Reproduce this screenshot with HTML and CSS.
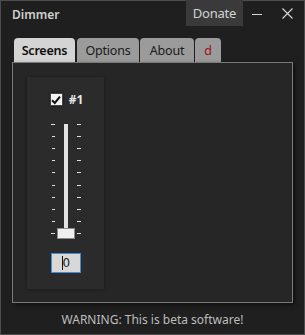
FILE: index.html
```html
<!DOCTYPE html>
<html lang="en">
<head>
  <meta charset="utf-8">
  <title>Dimmer</title>
  <link rel="stylesheet" href="styles.css">
</head>
<body>
  <div class="window">
    <div class="titlebar">
      <span class="title">Dimmer</span>
      <span class="donate">Donate</span>
      <span class="win-btn min">
        <svg width="10" height="10" viewBox="0 0 10 10"><path d="M0 5.5H10" stroke="#d8d8d8" stroke-width="1"/></svg>
      </span>
      <span class="win-btn close">
        <svg width="11" height="11" viewBox="0 0 11 11"><path d="M0.5 0.5L10.5 10.5M10.5 0.5L0.5 10.5" stroke="#d8d8d8" stroke-width="1.1"/></svg>
      </span>
    </div>

    <div class="tabs">
      <div class="tab active">Screens</div>
      <div class="tab">Options</div>
      <div class="tab">About</div>
      <div class="tab red">d</div>
    </div>

    <div class="panel">
      <div class="screen-box">
        <label class="check-row">
          <span class="checkbox">
            <svg width="10" height="10" viewBox="0 0 10 10"><path d="M1 5.2L3.8 8L9 1.6" fill="none" stroke="#111" stroke-width="2"/></svg>
          </span>
          <span class="num">#1</span>
        </label>

        <div class="slider">
          <div class="ticks">
            <i class="wide"></i><i></i><i></i><i></i><i></i><i></i><i></i><i></i><i></i><i class="wide"></i>
          </div>
          <div class="rail">
            <div class="track"></div>
            <div class="thumb"></div>
          </div>
          <div class="ticks right">
            <i></i><i></i><i></i><i></i><i></i><i></i><i></i><i></i><i></i><i></i>
          </div>
        </div>

        <div class="value-box"><span class="caret"></span>0</div>
      </div>
    </div>

    <div class="warning">WARNING: This is beta software!</div>
  </div>
</body>
</html>
```

FILE: styles.css
```css
body {
  margin: 0;
  background: #1f1f1f;
  font-family: "Noto Sans", "Open Sans", sans-serif;
}

.window {
  width: 305px;
  height: 335px;
  box-sizing: border-box;
  border: 1px solid #4c4c4c;
  background: #1f1f1f;
  display: flex;
  flex-direction: column;
}

/* title bar */
.titlebar {
  height: 25px;
  display: flex;
  align-items: center;
}
.title {
  flex: 1;
  padding-left: 11px;
  font-size: 12px;
  font-weight: 600;
  color: #d0d0d0;
  margin-top: 2px;
}
.donate {
  align-self: flex-start;
  height: 26px;
  margin-top: -1px;
  width: 57px;
  box-sizing: border-box;
  background: #3a3a3a;
  color: #d4d4d4;
  font-size: 13px;
  letter-spacing: -0.2px;
  display: flex;
  align-items: center;
  justify-content: center;
}
.win-btn {
  display: flex;
  justify-content: center;
}
.win-btn.min {
  width: 28px;
}
.win-btn.close {
  width: 32px;
  margin-right: 1px;
}

/* tabs */
.tabs {
  display: flex;
  padding-left: 13px;
  margin-top: 12px;
  height: 24px;
}
.tab {
  border-radius: 4px 4px 0 0;
  background: #9b9b9b;
  color: #1a1a1a;
  font-size: 12.5px;
  letter-spacing: -0.2px;
  display: flex;
  align-items: center;
  justify-content: center;
  margin-right: 1px;
}
.tab:nth-child(1) { width: 61px; margin-right: 2px; }
.tab:nth-child(2) { width: 62px; }
.tab:nth-child(3) { width: 54px; }
.tab:nth-child(4) { width: 26px; }
.tab.active {
  background: #d4d4d4;
  font-weight: 600;
  color: #0e0e0e;
}
.tab.red {
  color: #a01010;
}

/* tab page */
.panel {
  margin: 0 11px 0 11px;
  height: 241px;
  box-sizing: border-box;
  border: 1px solid #7a7a7a;
  background: #262626;
  box-shadow: 2px 2px 4px rgba(0, 0, 0, 0.5);
  padding: 14px;
}

.screen-box {
  width: 77px;
  height: 212px;
  background: #2b2b2b;
  box-shadow: 0 0 3px rgba(0, 0, 0, 0.35);
  display: flex;
  flex-direction: column;
  align-items: center;
  padding-top: 14px;
  box-sizing: border-box;
}

.check-row {
  display: flex;
  align-items: center;
  gap: 6px;
  margin-left: 2px;
}
.checkbox {
  width: 13px;
  height: 13px;
  box-sizing: border-box;
  border: 1px solid #444;
  background: #f4f4f4;
  box-shadow: 0 0 2px rgba(0, 0, 0, 0.6);
  display: flex;
  align-items: center;
  justify-content: center;
}
.num {
  color: #e6e6e6;
  font-size: 12px;
  font-weight: 700;
}

/* slider */
.slider {
  display: flex;
  margin-top: 16px;
  height: 115px;
}
.ticks {
  width: 14px;
  display: flex;
  flex-direction: column;
  justify-content: space-between;
  align-items: flex-end;
  height: 110px;
}
.ticks i {
  display: block;
  width: 3px;
  height: 1px;
  background: #e0e0e0;
}
.ticks i.wide {
  width: 4px;
}
.ticks.right {
  align-items: flex-start;
}
.ticks.right i {
  width: 4px;
}
.rail {
  position: relative;
  width: 22px;
  height: 115px;
}
.track {
  margin: 0 auto;
  width: 4px;
  height: 108px;
  background: #e2e2e2;
}
.thumb {
  position: absolute;
  left: 2px;
  top: 104px;
  width: 18px;
  height: 11px;
  box-sizing: border-box;
  background: #f0f0f0;
  border: 1px solid #8a8a8a;
}

.value-box {
  margin-top: 14px;
  width: 30px;
  height: 20px;
  box-sizing: border-box;
  border: 1px solid #3e8ee0;
  background: #d8d8d8;
  color: #222;
  font-family: "DejaVu Sans", sans-serif;
  font-size: 12px;
  display: flex;
  align-items: center;
  padding-left: 10px;
}
.caret {
  width: 1px;
  height: 14px;
  background: #111;
}

.warning {
  text-align: center;
  color: #bdbdbd;
  font-size: 12px;
  margin-top: 8px;
}
```
